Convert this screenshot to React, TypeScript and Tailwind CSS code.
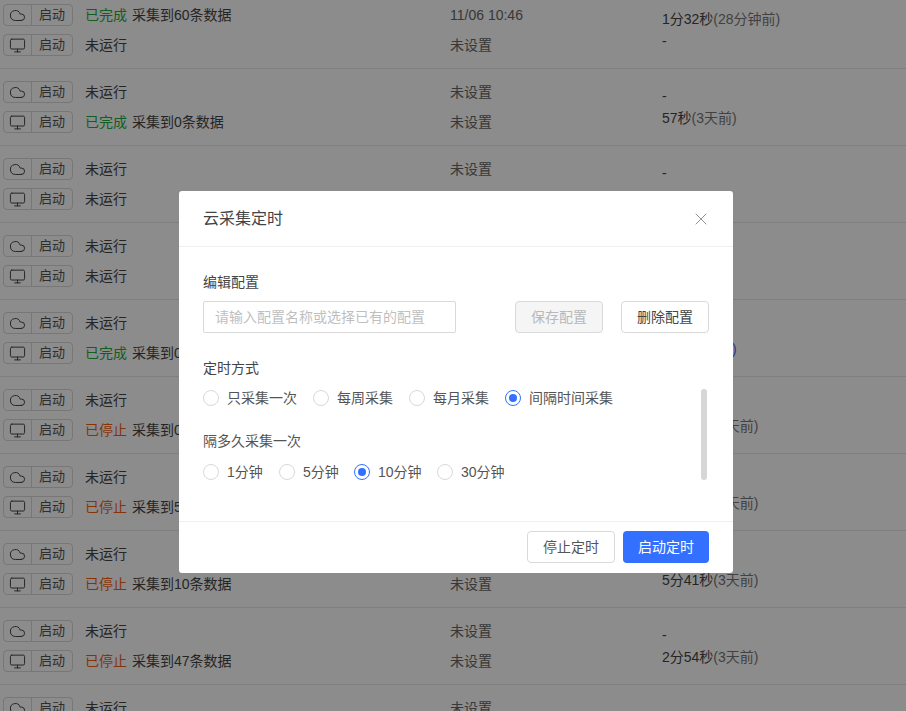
import { Cloud, Monitor, X } from 'lucide-react';

type Cell = {
  status: string;
  detail?: string;
  time: string;
  took: string;
  ago?: string;
  agoBlue?: boolean;
};

const idle = { status: '未运行', time: '未设置', took: '-' };

const rows: [Cell, Cell][] = [
  [
    { status: '已完成', detail: '采集到60条数据', time: '11/06 10:46', took: '1分32秒', ago: '(28分钟前)' },
    idle,
  ],
  [idle, { status: '已完成', detail: '采集到0条数据', time: '未设置', took: '57秒', ago: '(3天前)' }],
  [idle, idle],
  [idle, idle],
  [idle, { status: '已完成', detail: '采集到0条数据', time: '未设置', took: '58秒', ago: '(3天前)', agoBlue: true }],
  [idle, { status: '已停止', detail: '采集到0条数据', time: '未设置', took: '1分02秒', ago: '(3天前)' }],
  [idle, { status: '已停止', detail: '采集到5条数据', time: '未设置', took: '1分08秒', ago: '(3天前)' }],
  [idle, { status: '已停止', detail: '采集到10条数据', time: '未设置', took: '5分41秒', ago: '(3天前)' }],
  [idle, { status: '已停止', detail: '采集到47条数据', time: '未设置', took: '2分54秒', ago: '(3天前)' }],
  [idle, idle],
];

function StartButton({ kind }: { kind: 'cloud' | 'pc' }) {
  return (
    <div className="flex h-[22px] w-[70px] shrink-0 rounded-[4px] border border-[#d9d9d9] text-[13px] text-[#555]">
      <div className="flex w-[28px] items-center justify-center border-r border-[#d9d9d9]">
        {kind === 'cloud' ? (
          <Cloud className="h-[17px] w-[17px] text-[#444]" strokeWidth={1.4} />
        ) : (
          <Monitor className="h-[17px] w-[17px] text-[#444]" strokeWidth={1.4} />
        )}
      </div>
      <div className="flex flex-1 items-center justify-center">启动</div>
    </div>
  );
}

function Line({ cell, kind }: { cell: Cell; kind: 'cloud' | 'pc' }) {
  const color = cell.status === '已完成' ? 'text-[#22ab3c]' : cell.status === '已停止' ? 'text-[#f2600c]' : 'text-[#444]';
  return (
    <div className="flex h-[22px] items-center text-[14px]">
      <div className="ml-[3px] w-[82px] shrink-0">
        <StartButton kind={kind} />
      </div>
      <div className="w-[365px] shrink-0 whitespace-nowrap">
        <span className={color}>{cell.status}</span>
        {cell.detail && <span className="ml-[5px] text-[#444]">{cell.detail}</span>}
      </div>
      <div className="text-[#666]">{cell.time}</div>
    </div>
  );
}

function Took({ cell }: { cell: Cell }) {
  return (
    <div className="h-[22px] whitespace-nowrap text-[14px] leading-[22px] text-[#444]">
      {cell.took}
      {cell.ago && <span className={cell.agoBlue ? 'text-[#3370ff]' : 'text-[#777]'}>{cell.ago}</span>}
    </div>
  );
}

function Radio({ label, checked, className }: { label: string; checked?: boolean; className: string }) {
  return (
    <div className={`flex items-center ${className}`}>
      <span
        className={`flex h-4 w-4 items-center justify-center rounded-full border bg-white ${
          checked ? 'border-[#3370ff]' : 'border-[#d9d9d9]'
        }`}
      >
        {checked && <span className="h-2 w-2 rounded-full bg-[#3370ff]" />}
      </span>
      <span className="ml-2 text-[14px] leading-[22px] text-[#555]">{label}</span>
    </div>
  );
}

export default function App() {
  return (
    <div
      className="relative h-[711px] w-[906px] overflow-hidden bg-white"
      style={{ fontFamily: '"Liberation Sans", "Noto Sans CJK SC", sans-serif' }}
    >
      {/* Table behind the mask */}
      <div className="-mt-[8px]">
        {rows.map((row, i) => (
          <div key={i} className="flex h-[77px] border-b border-[#e8e8e8]">
            <div className="flex w-[662px] shrink-0 flex-col gap-2 pt-[12px]">
              <Line cell={row[0]} kind="cloud" />
              <Line cell={row[1]} kind="pc" />
            </div>
            <div className="flex flex-col justify-center">
              <Took cell={row[0]} />
              <Took cell={row[1]} />
            </div>
          </div>
        ))}
      </div>

      {/* Mask + dialog */}
      <div className="absolute inset-0 bg-black/45 pl-[179px] pt-[191px]">
        <div className="relative flex h-[382px] w-[554px] flex-col rounded-[3px] bg-white">
          <div className="flex h-[56px] shrink-0 items-center justify-between border-b border-[#f0f0f0] pl-[24px] pr-[22px]">
            <span className="text-[16px] text-[#444]">云采集定时</span>
            <X className="h-5 w-5 text-[#888]" strokeWidth={1.1} />
          </div>

          <div className="flex-1 px-[24px] pt-[24px]">
            <div className="text-[14px] leading-[22px] text-[#444]">编辑配置</div>
            <div className="mt-[8px] flex">
              <div className="flex h-[32px] w-[253px] items-center rounded-[2px] border border-[#d9d9d9] px-[11px] text-[14px] text-[#bfbfbf]">
                请输入配置名称或选择已有的配置
              </div>
              <button className="ml-[59px] h-[32px] w-[88px] rounded-[4px] border border-[#d9d9d9] bg-[#f5f5f5] text-[14px] text-[#b8b8b8]">
                保存配置
              </button>
              <button className="ml-[18px] h-[32px] w-[88px] rounded-[4px] border border-[#d9d9d9] bg-white text-[14px] text-[#444]">
                删除配置
              </button>
            </div>

            <div className="mt-[24px] text-[14px] leading-[22px] text-[#444]">定时方式</div>
            <div className="mt-[8px] flex">
              <Radio label="只采集一次" className="w-[110px]" />
              <Radio label="每周采集" className="w-[96px]" />
              <Radio label="每月采集" className="w-[96px]" />
              <Radio label="间隔时间采集" checked className="w-[130px]" />
            </div>

            <div className="mt-[21px] text-[14px] leading-[22px] text-[#555]">隔多久采集一次</div>
            <div className="mt-[9px] flex">
              <Radio label="1分钟" className="w-[76px]" />
              <Radio label="5分钟" className="w-[75px]" />
              <Radio label="10分钟" checked className="w-[83px]" />
              <Radio label="30分钟" className="w-[90px]" />
            </div>
          </div>

          {/* Scrollbar thumb */}
          <div className="absolute left-[522px] top-[198px] h-[91px] w-[6px] rounded-[3px] bg-[#d6d6d6]" />

          <div className="flex h-[52px] shrink-0 items-start justify-end gap-2 border-t border-[#f0f0f0] pr-[24px] pt-[9px]">
            <button className="h-[32px] w-[88px] rounded-[4px] border border-[#d9d9d9] bg-white text-[14px] text-[#555]">
              停止定时
            </button>
            <button className="h-[32px] w-[86px] rounded-[4px] bg-[#3370ff] text-[14px] text-white">启动定时</button>
          </div>
        </div>
      </div>
    </div>
  );
}
